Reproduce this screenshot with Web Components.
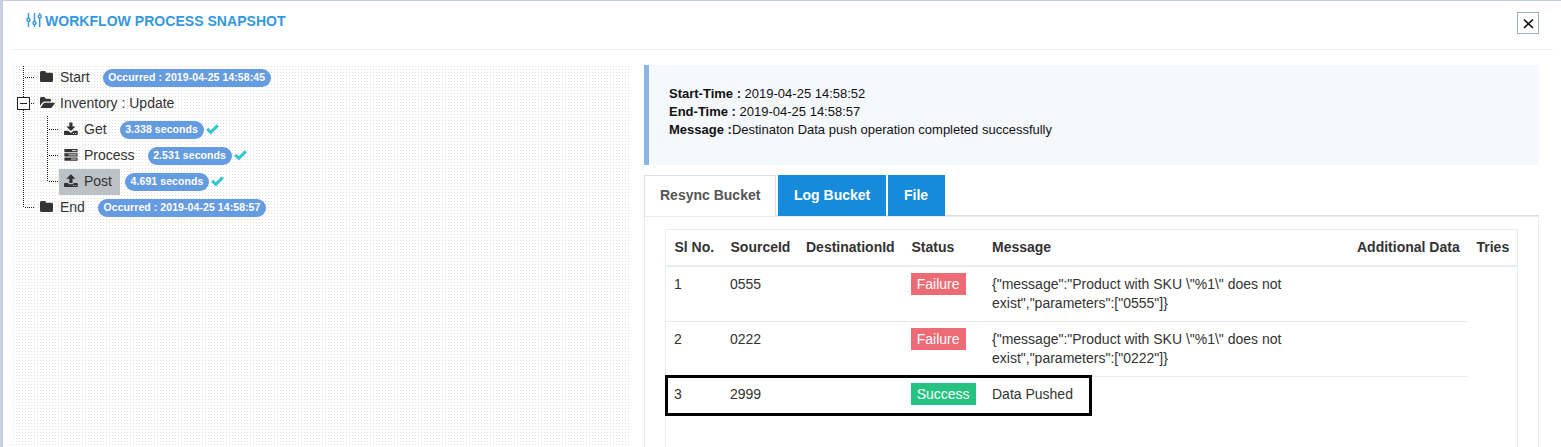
<!DOCTYPE html>
<html lang="en">
<head>
<meta charset="utf-8">
<title>Workflow Process Snapshot</title>
<style>
html,body{margin:0;height:100%;overflow:hidden;background:#fff}
body{font-family:"Liberation Sans",Arial,sans-serif;font-size:14px;color:#333}
</style>
</head>
<body>
<snapshot-dialog>
  <process-tree slot="tree">
    <tree-row icon="folder" line="tee" badge="Occurred : 2019-04-25 14:58:45">Start</tree-row>
    <tree-row icon="open" line="box">Inventory : Update</tree-row>
    <tree-row level="2" icon="get" line="tee" badge="3.338 seconds" done>Get</tree-row>
    <tree-row level="2" icon="process" line="tee" badge="2.531 seconds" done>Process</tree-row>
    <tree-row level="2" icon="post" line="end" badge="4.691 seconds" done selected>Post</tree-row>
    <tree-row icon="folder" line="end" badge="Occurred : 2019-04-25 14:58:57">End</tree-row>
  </process-tree>
  <info-note></info-note>
  <bucket-tabs><bucket-table></bucket-table></bucket-tabs>
</snapshot-dialog>
<script>
function define(name, html, after) {
  const t = document.createElement('template');
  t.innerHTML = html;
  customElements.define(name, class extends HTMLElement {
    constructor() {
      super();
      this.attachShadow({mode: 'open'}).append(t.content.cloneNode(true));
    }
    connectedCallback() { if (after) after(this, this.shadowRoot); }
  });
}

define('snapshot-dialog', `<style>
:host{display:flex;flex-direction:column;box-sizing:border-box;width:1561px;height:447px;border-left:3px solid #c8cfe3;border-top:1px solid #c3cbe3;overflow:hidden;background:#fff}
header{display:flex;justify-content:space-between;box-sizing:border-box;height:49px;flex:none;margin:0 8px 0 9px;border-bottom:1px solid #eee;padding:11px 14px 0 14px}
h1{display:flex;align-items:flex-start;gap:3px;margin:0;font-size:14px;line-height:18px;letter-spacing:.04px;color:#3598dc}
button{box-sizing:border-box;width:22px;height:22px;padding:0;border:1px solid #a0aebb;background:#fff;display:block}
button svg,h1 svg{display:block}
main{display:grid;grid-template-columns:618px 895px;column-gap:13px;margin:15px 0 0 10px;flex:1;min-height:0}
.right{display:flex;flex-direction:column;gap:10px;min-height:0}
</style>
<header><h1><svg width="16" height="16" viewBox="0 0 16 16" fill="none" stroke="#3598dc" stroke-width="1.4"><path d="M2.500 1v5.200M2.500 9.300V15M8.500 1v8.500M8.500 12.500V15M13.700 1v1.700M13.700 6v9"/><circle cx="2.500" cy="7.700" r="1.500"/><circle cx="8.500" cy="11" r="1.500"/><circle cx="13.700" cy="4.400" r="1.500"/></svg><span>WORKFLOW PROCESS SNAPSHOT</span></h1>
<button aria-label="Close"><svg width="20" height="20" viewBox="0 0 20 20"><path d="M6 6.500l9 8.500M15 6.500l-9 8.500" stroke="#111" stroke-width="1.700"/></svg></button></header>
<main><slot name="tree"></slot><div class="right"><slot></slot></div></main>`);

define('process-tree', `<style>
:host{display:block;overflow:hidden;background:conic-gradient(from 270deg at 1px 1px,#dfdfdf 90deg,transparent 0) 0 1px/3px 3px}
.rows{display:flex;flex-direction:column;margin-top:-1px}
</style><div class="rows"><slot></slot></div>`);

const ICONS = {
  folder: '<path d="M0 2.500Q0 1 1.500 1H4.500Q6 1 6 2.800H11.500Q13 2.800 13 4.300V10.500Q13 12 11.500 12H1.500Q0 12 0 10.500Z"/>',
  open: '<path d="M0 9.500V2.500Q0 1 1.500 1H4Q5.500 1 5.500 2.700H9.500Q11 2.700 11 4.200V5.600H4.500Q3.200 5.600 2.300 6.800Z"/><path d="M4.700 6.700H14.500Q15.200 6.700 14.700 7.400L12 11.300Q11.500 12 10.600 12H1Q.400 12 .800 11.400L3.400 7.500Q4 6.700 4.700 6.700Z"/>',
  get: '<path d="M5.300 .500h3.200v4h3L6.900 9 2.300 4.500h3z"/><path fill-rule="evenodd" d="M.800 8.700h3.400L6.900 11l2.700-2.300H13q.800 0 .8.800v2.700q0 .8-.8.8H.800Q0 13 0 12.200V9.500q0-.8.8-.8zM9 11v.9h1V11zM11.200 11v.9h1V11z"/>',
  process: '<path d="M.400 1h13.200v3.300H.400zM.400 5.200h13.200v3.300H.400zM.400 9.400h13.200v3.300H.400z"/><path d="M8 2.650h4.600M4.500 6.850h8.100M7 11.050h5.600" stroke="#eee" stroke-width=".9"/>',
  post: '<path d="M5.300 9V4.700h-3L6.900 .200l4.600 4.500h-3V9z"/><path fill-rule="evenodd" d="M.800 8.900h3.600v1.300h5V8.900H13q.8 0 .8.8v2.500q0 .8-.8.8H.800Q0 13 0 12.200V9.700q0-.8.8-.8zM9 11v.9h1V11zM11.200 11v.9h1V11z"/>'
};
define('tree-row', `<style>
:host{display:flex;align-items:center;height:26px}
.gutter{flex:none;display:block}
.node{display:flex;align-items:center;box-sizing:border-box;height:26px;padding:0 8px 0 5px;white-space:nowrap;margin-right:5px}
.node svg{width:16px;height:14px;margin-right:4px;fill:#333}
:host([selected]) .node{background:#bbc1c5;height:26px;position:relative;top:1px}
:host([selected]) .node>*{position:relative;top:-1px}
.label{line-height:16px}
.badge{box-sizing:border-box;height:18px;border-radius:9px;background:#659be0;color:#fff;font:bold 10.5px/17px "Liberation Sans",Arial,sans-serif;letter-spacing:.075px;padding:0 5.600px;white-space:nowrap;position:relative;top:1px}
.badge:empty{display:none}
.check{display:none;margin-left:2.200px}
:host([done]) .check{display:block}
</style><svg class="gutter" height="26" shape-rendering="crispEdges"></svg>
<span class="node"><svg class="icon" viewBox="0 0 16 14"></svg><span class="label"><slot></slot></span></span>
<span class="badge"></span><svg class="check" width="13" height="12" viewBox="0 0 13 12"><path d="M1.200 5.800l3.700 3.500L11.800 2.400" fill="none" stroke="#36c6d3" stroke-width="3.100"/></svg>`,
(el, root) => {
  const two = el.getAttribute('level') === '2', line = el.getAttribute('line');
  const g = root.querySelector('.gutter');
  g.setAttribute('width', two ? 46 : 22);
  const seg = (x1, y1, x2, y2) => `<path d="M${x1} ${y1}L${x2} ${y2}" stroke="#222" stroke-dasharray="1 1"/>`;
  const x = two ? 34.5 : 10.5;
  let s = two ? seg(10.5, 0, 10.5, 26) : '';
  s += seg(x, 0, x, line === 'end' ? 14 : 26) + seg(x + 1.5, 13.5, x + 10.5, 13.5);
  if (line === 'box') s += '<path d="M4.500 7.500h12v12h-12z" fill="#fff" stroke="#222"/><path d="M7 13.500h7" stroke="#222"/>';
  g.innerHTML = s;
  root.querySelector('.icon').innerHTML = ICONS[el.getAttribute('icon')];
  root.querySelector('.badge').textContent = el.getAttribute('badge') || '';
});

define('info-note', `<style>
:host{display:block;box-sizing:border-box;height:100px;flex:none;border-left:5px solid #8bb4e7;background:#f5f8fd;padding:20px;font-size:13px;line-height:18px;color:#111}
</style><div><b>Start-Time :</b> 2019-04-25 14:58:52</div><div><b>End-Time :</b> 2019-04-25 14:58:57</div><div><b>Message :</b>Destinaton Data push operation completed successfully</div>`);

define('bucket-tabs', `<style>
:host{display:flex;flex-direction:column;flex:1;min-height:0}
nav{display:flex;gap:2px;height:41px;flex:none;background:linear-gradient(#ddd,#ddd) 0 100%/100% 1px no-repeat}
nav span{box-sizing:border-box;padding:0 16px;background:#168adb;color:#fff;font-weight:bold;line-height:40px;white-space:nowrap}
nav .on{background:#fff;color:#555;border:1px solid #ddd;border-bottom:0;padding:0 0 0 15px;width:132px;line-height:39px}
nav .log{width:108px}
nav .file{width:57px}
.pane{flex:1;border:1px solid #e7ecf1;border-bottom:0;padding:12px 20px 0;min-height:0}
</style><nav><span class="on">Resync Bucket</span><span class="log">Log Bucket</span><span class="file">File</span></nav><div class="pane"><slot></slot></div>`);

define('bucket-table', `<style>
:host{display:block;box-sizing:border-box;height:240px;border:1px solid #e7ecf1;position:relative}
.row{display:grid;grid-template-columns:56px 76px 105px 81px 365px 119px 49px;line-height:19px;width:851px}
.row>*{box-sizing:border-box;padding:8px 0 8px 8px}
.head{font-weight:bold;border-bottom:2px solid #e7ecf1;white-space:nowrap}
.head>*{padding-left:8.500px}
.head>.flush{padding-left:8px}
.line{width:802px;grid-template-columns:56px 76px 105px 81px 365px 119px;border-bottom:1px solid #e7ecf1}
.tag{display:inline-block;height:22px;line-height:22px;padding:0 6.200px 0 5.700px;margin:-2px 0 -1px;background:#ed6b75;color:#fff;vertical-align:top}
.ok{background:#26c281}
.mark{position:absolute;box-sizing:border-box;left:-1px;top:145px;width:427px;height:41px;border:3px solid #000}
</style>
<div class="row head"><span>Sl No.</span><span>SourceId</span><span class="flush">DestinationId</span><span>Status</span><span class="flush">Message</span><span class="flush">Additional Data</span><span>Tries</span></div>
<div class="row line"><span>1</span><span>0555</span><span></span><span><span class="tag">Failure</span></span><span>{"message":"Product with SKU \\"%1\\" does not<br>exist","parameters":["0555"]}</span><span></span></div>
<div class="row line"><span>2</span><span>0222</span><span></span><span><span class="tag">Failure</span></span><span>{"message":"Product with SKU \\"%1\\" does not<br>exist","parameters":["0222"]}</span><span></span></div>
<div class="row"><span>3</span><span>2999</span><span></span><span><span class="tag ok">Success</span></span><span>Data Pushed</span></div>
<div class="mark"></div>`);
</script>
</body>
</html>
